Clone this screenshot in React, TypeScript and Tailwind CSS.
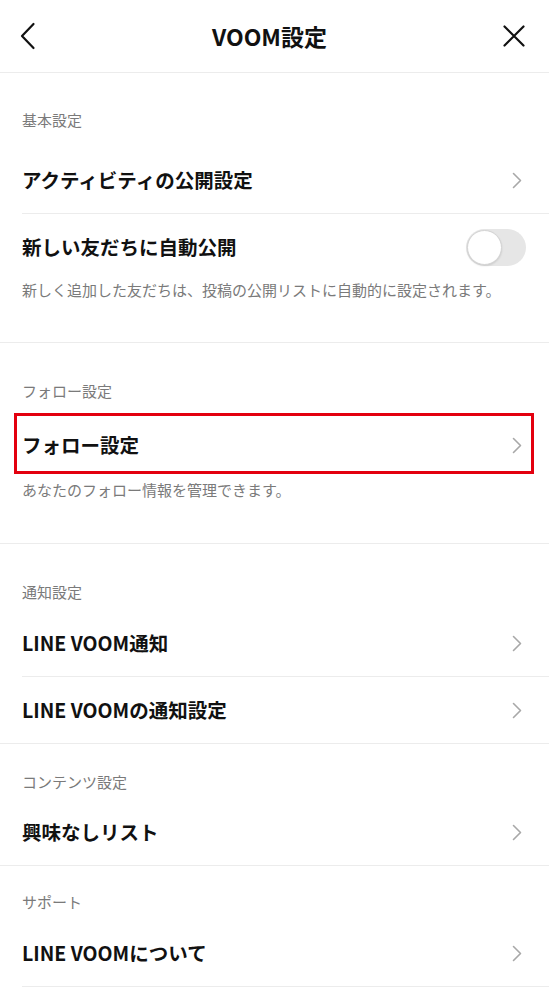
import React from 'react';

const font = { fontFamily: '"Noto Sans CJK JP", "Noto Sans", sans-serif' };

function Chevron() {
  return (
    <svg width="10" height="17" viewBox="0 0 10 17" fill="none" className="shrink-0">
      <path d="M1.5 1.5 L8.5 8.5 L1.5 15.5" stroke="#a8a8a8" strokeWidth="1.6" strokeLinecap="round" strokeLinejoin="round" />
    </svg>
  );
}

function Label({ text, className }: { text: string; className: string }) {
  return (
    <div className={`pl-[22px] text-[15px] leading-5 text-[#7a7a7a] ${className}`}>{text}</div>
  );
}

function Row({ text, children }: { text: string; children?: React.ReactNode }) {
  return (
    <div className="flex h-[66px] items-center justify-between pl-[22px] pr-[27px]">
      <span className="text-[19.5px] font-bold text-[#111111]">{text}</span>
      {children ?? <Chevron />}
    </div>
  );
}

function Divider() {
  return <div className="ml-[22px] h-px bg-[#ececec]" />;
}

function SectionEnd() {
  return <div className="h-px bg-[#ececec]" />;
}

function Toggle() {
  return (
    <div className="-mr-[4px] flex h-[37px] w-[60px] items-center rounded-full bg-[#e6e6e6] p-[1px]">
      <div className="h-[35px] w-[35px] rounded-full border border-[#d4d4d4] bg-white shadow-[0_1px_2px_rgba(0,0,0,0.12)]" />
    </div>
  );
}

export default function App() {
  return (
    <div className="min-h-screen w-full bg-white" style={font}>
      <header className="flex h-[73px] items-center justify-between border-b border-[#ececec] pl-[20px] pr-[24px]">
        <svg width="16" height="28" viewBox="0 0 16 28" fill="none">
          <path d="M13.5 2 L2 14 L13.5 26" stroke="#111" strokeWidth="2.2" strokeLinecap="round" strokeLinejoin="round" />
        </svg>
        <h1 className="text-[23px] font-bold text-[#111111]">VOOM設定</h1>
        <svg width="22" height="22" viewBox="0 0 22 22" fill="none">
          <path d="M1.5 1.5 L20.5 20.5 M20.5 1.5 L1.5 20.5" stroke="#111" strokeWidth="2.2" strokeLinecap="round" />
        </svg>
      </header>

      <section>
        <Label text="基本設定" className="pt-[37px] pb-[17px]" />
        <Row text="アクティビティの公開設定" />
        <Divider />
        <Row text="新しい友だちに自動公開">
          <Toggle />
        </Row>
        <p className="pl-[22px] pb-[42px] text-[15px] leading-5 text-[#7a7a7a]">
          新しく追加した友だちは、投稿の公開リストに自動的に設定されます。
        </p>
      </section>
      <SectionEnd />

      <section>
        <Label text="フォロー設定" className="pt-[38px] pb-[11px]" />
        <div className="relative">
          <Row text="フォロー設定" />
          <div className="pointer-events-none absolute left-[14px] right-[15px] top-[1px] bottom-[4px] border-[3px] border-[#e3000f]" />
        </div>
        <p className="pl-[22px] pt-[2px] pb-[43px] text-[15px] leading-5 text-[#7a7a7a]">
          あなたのフォロー情報を管理できます。
        </p>
      </section>
      <SectionEnd />

      <section>
        <Label text="通知設定" className="pt-[38px] pb-[8px]" />
        <Row text="LINE VOOM通知" />
        <Divider />
        <Row text="LINE VOOMの通知設定" />
      </section>
      <SectionEnd />

      <section>
        <Label text="コンテンツ設定" className="pt-[28px] pb-[7px]" />
        <Row text="興味なしリスト" />
      </section>
      <SectionEnd />

      <section>
        <Label text="サポート" className="pt-[26px] pb-[8px]" />
        <Row text="LINE VOOMについて" />
        <Divider />
      </section>
    </div>
  );
}
